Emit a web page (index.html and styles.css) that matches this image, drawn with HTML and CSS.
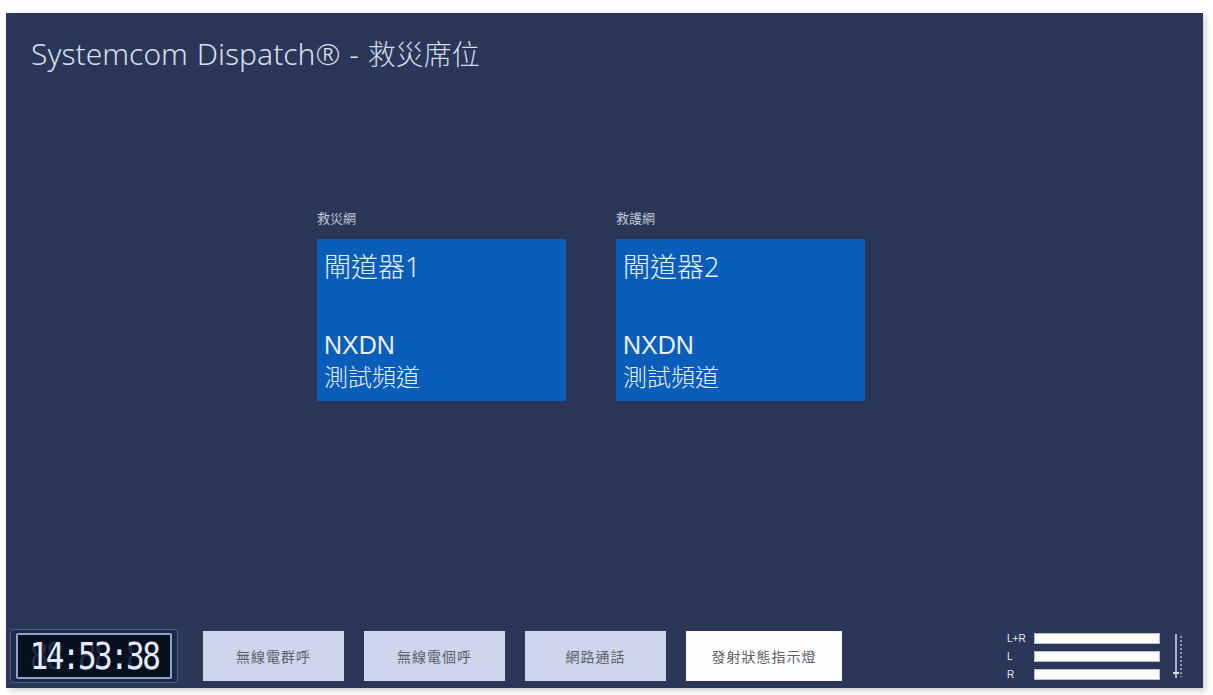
FILE: index.html
```html
<!DOCTYPE html>
<html lang="zh-TW">
<head>
    <meta charset="UTF-8">
    <title>Systemcom Dispatch - 救災席位</title>
    <link rel="stylesheet" href="styles.css">
</head>
<body>
    <div class="console">
        <header class="console-header">Systemcom Dispatch® - <span class="console-seat">救災席位</span></header>

        <main class="channels">
            <div class="channel">
                <div class="channel-label">救災網</div>
                <div class="channel-card">
                    <div class="channel-name">閘道器1</div>
                    <div class="channel-info">
                        <div class="channel-mode">NXDN</div>
                        <div>測試頻道</div>
                    </div>
                </div>
            </div>
            <div class="channel">
                <div class="channel-label">救護網</div>
                <div class="channel-card">
                    <div class="channel-name">閘道器2</div>
                    <div class="channel-info">
                        <div class="channel-mode">NXDN</div>
                        <div>測試頻道</div>
                    </div>
                </div>
            </div>
        </main>

        <footer class="console-footer">
            <div class="clock">
                <div class="clock-face">
                    <span class="clock-ghost">88:88:88</span>
                    <span class="clock-time">14:53:38</span>
                </div>
            </div>

            <div class="actions">
                <button class="btn">無線電群呼</button>
                <button class="btn">無線電個呼</button>
                <button class="btn">網路通話</button>
                <button class="btn btn-light">發射狀態指示燈</button>
            </div>

            <div class="meter">
                <div class="meter-rows">
                    <div class="meter-row"><span class="meter-label">L+R</span><span class="meter-bar"></span></div>
                    <div class="meter-row"><span class="meter-label">L</span><span class="meter-bar"></span></div>
                    <div class="meter-row"><span class="meter-label">R</span><span class="meter-bar"></span></div>
                </div>
                <svg class="meter-slider" width="12" height="46" viewBox="0 0 12 46">
                    <line x1="4" y1="1" x2="4" y2="40" stroke="#d8deea" stroke-width="1.5"/>
                    <line x1="9" y1="3" x2="9" y2="44" stroke="#aeb8cc" stroke-width="1.5" stroke-dasharray="2 2"/>
                    <rect x="1" y="39" width="6" height="2" fill="#d8deea"/>
                    <line x1="4" y1="40" x2="4" y2="45" stroke="#d8deea" stroke-width="1.5"/>
                </svg>
            </div>
        </footer>
    </div>
</body>
</html>
```

FILE: styles.css
```css
:root {
    --color-panel: #2a3758;
    --color-card: #0a5eb9;
    --color-text: #dfe6f2;
    --color-label: #c3cada;
    --color-button: #cdd6ea;
    --color-button-text: #5c5f66;
}

* {
    box-sizing: border-box;
    margin: 0;
    padding: 0;
}

body {
    background-color: #ffffff;
    font-family: "Noto Sans", "Noto Sans CJK TC", sans-serif;
    width: 1213px;
    height: 695px;
    overflow: hidden;
    padding: 13px 10px 7px 6px;
}

.console {
    height: 100%;
    background-color: var(--color-panel);
    color: var(--color-text);
    display: flex;
    flex-direction: column;
    box-shadow: 3px 3px 6px rgba(0, 0, 0, 0.18);
}

.console-header {
    padding: 22px 25px 0;
    font-size: 30px;
    line-height: 38px;
    font-weight: 300;
    color: #d6deeb;
    word-spacing: 1px;
}

.console-seat {
    font-size: 28px;
}

/* channel tiles */
.channels {
    flex: 1;
    display: flex;
    gap: 50px;
    padding: 136px 0 0 311px;
}

.channel-label {
    font-size: 13px;
    line-height: 18px;
    color: var(--color-label);
    margin-bottom: 12px;
}

.channel-card {
    width: 249px;
    height: 162px;
    background-color: var(--color-card);
    padding: 12px 7px 8px;
    display: flex;
    flex-direction: column;
    justify-content: space-between;
    font-size: 24px;
    line-height: 32px;
    font-weight: 300;
    color: #e8eef8;
}

.channel-name {
    font-size: 27px;
}

.channel-mode {
    font-family: "Liberation Sans", sans-serif;
    font-weight: 400;
    font-size: 25px;
}

/* bottom bar */
.console-footer {
    display: flex;
    align-items: center;
    padding: 0 0 5px 4px;
}

.clock {
    width: 168px;
    height: 54px;
    padding: 3px 5px;
    background-color: #1c2a4a;
    border: 1px solid #4b5f88;
    border-radius: 4px;
}

.clock-face {
    position: relative;
    height: 100%;
    background-color: #07101f;
    border: 2px solid #8fa3ca;
    border-radius: 2px;
    font-family: "DejaVu Sans Mono", monospace;
    font-size: 36px;
    line-height: 42px;
    letter-spacing: -3px;
    text-align: center;
}

.clock-ghost,
.clock-time {
    position: absolute;
    inset: 0;
    transform: scale(0.86, 1.05);
}

.clock-ghost {
    color: #222c40;
}

.clock-time {
    color: #e2ecfa;
}

.actions {
    display: flex;
    gap: 20px;
    margin-left: 25px;
}

.btn {
    width: 141px;
    height: 50px;
    border: none;
    background-color: var(--color-button);
    color: var(--color-button-text);
    font-family: "Noto Sans CJK TC", sans-serif;
    font-size: 14px;
    letter-spacing: 1px;
}

.btn-light {
    width: 156px;
    background-color: #fdfdfe;
}

/* audio level meter */
.meter {
    margin-left: auto;
    margin-right: 19px;
    display: flex;
    align-items: center;
    gap: 12px;
}

.meter-rows {
    display: flex;
    flex-direction: column;
    gap: 7px;
}

.meter-row {
    display: flex;
    align-items: center;
}

.meter-label {
    width: 27px;
    font-family: "Liberation Sans", sans-serif;
    font-size: 10px;
    color: #e6ebf4;
}

.meter-bar {
    width: 126px;
    height: 11px;
    background-color: #fdfdfb;
    border: 1px solid #b7bfcf;
}
```
